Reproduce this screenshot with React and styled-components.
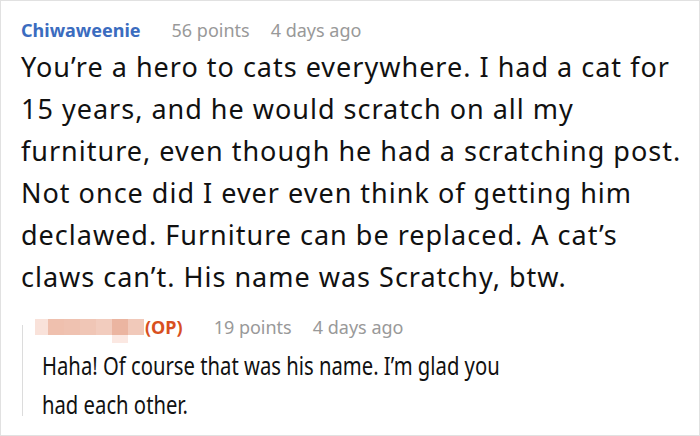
import React from "react";
import styled, { createGlobalStyle } from "styled-components";

const Global = createGlobalStyle`
  html, body { margin: 0; padding: 0; background: #fff; }
  body { font-family: "Noto Sans", "Open Sans", sans-serif; }
`;

const Card = styled.div`
  box-sizing: border-box;
  width: 700px;
  height: 436px;
  border: 1px solid #e1e1e1;
  padding: 17px 0 0 20px;
  overflow: hidden;
`;

const Meta = styled.div`
  display: flex;
  align-items: baseline;
  gap: 21px;
  font-size: 18px;
  line-height: 24px;
  height: 24px;
  white-space: nowrap;
`;

const Author = styled.span`
  color: #3b6cbf;
  font-weight: 700;
  display: inline-flex;
  align-items: baseline;
  margin-right: 10px;
`;

const Op = styled.span`
  color: #d8501f;
  font-weight: 700;
`;

const Stat = styled.span`
  color: #999;
`;

const Body = styled.p`
  margin: 4px 0 0;
  font-size: 27px;
  letter-spacing: 1px;
  line-height: 42px;
  color: #111;
  white-space: nowrap;
`;

const Reply = styled.div`
  display: flex;
  margin: 17px 0 0 1px;
`;

const Rail = styled.div`
  width: 1px;
  background: #dcdcdc;
  margin: 10px 0 8px;
  flex: none;
`;

const ReplyMain = styled.div`
  padding-left: 12px;
`;

const Redacted = styled.span`
  display: inline-flex;
  position: relative;
  align-self: center;
  height: 16px;
  margin-right: 1px;
`;

const Px = styled.span`
  display: block;
  width: ${(p) => p.w}px;
  height: 16px;
  background: ${(p) => p.c};
`;

const PxBelow = styled.span`
  position: absolute;
  left: 77px;
  top: 16px;
  width: 16px;
  height: 8px;
  background: #fbe8e2;
`;

const ReplyBody = styled.p`
  margin: 7px 0 0 7px;
  font-size: 25px;
  line-height: 39px;
  color: #111;
  white-space: nowrap;
  transform: scaleX(0.81);
  transform-origin: left center;
`;

const blocks = [
  [13, "#f9e2da"],
  [16, "#efc0ae"],
  [16, "#efc2b1"],
  [16, "#f0c6b6"],
  [16, "#f2ccbe"],
  [16, "#ebb5a1"],
  [16, "#f1c9ba"],
];

export default function App() {
  return (
    <>
      <Global />
      <Card>
        <Meta>
          <Author>Chiwaweenie</Author>
          <Stat>56 points</Stat>
          <Stat>4 days ago</Stat>
        </Meta>
        <Body>
          You’re a hero to cats everywhere. I had a cat for
          <br />
          15 years, and he would scratch on all my
          <br />
          furniture, even though he had a scratching post.
          <br />
          Not once did I ever even think of getting him
          <br />
          declawed. Furniture can be replaced. A cat’s
          <br />
          claws can’t. His name was Scratchy, btw.
        </Body>
        <Reply>
          <Rail />
          <ReplyMain>
            <Meta>
              <Author>
                <Redacted>
                  {blocks.map(([w, c], i) => (
                    <Px key={i} w={w} c={c} />
                  ))}
                  <PxBelow />
                </Redacted>
                <Op>(OP)</Op>
              </Author>
              <Stat>19 points</Stat>
              <Stat>4 days ago</Stat>
            </Meta>
            <ReplyBody>
              Haha! Of course that was his name. I’m glad you
              <br />
              had each other.
            </ReplyBody>
          </ReplyMain>
        </Reply>
      </Card>
    </>
  );
}
